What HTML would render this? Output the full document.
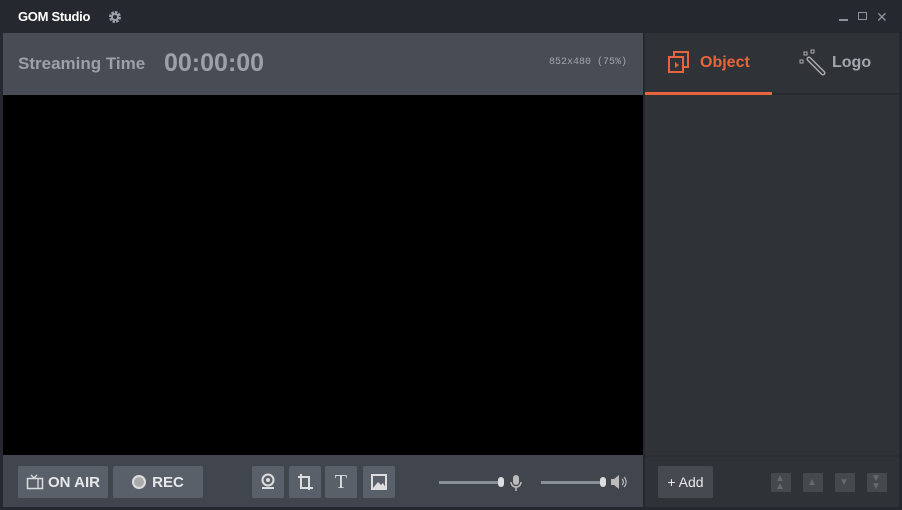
<!DOCTYPE html><html><head><style>
*{margin:0;padding:0;box-sizing:border-box}
body{width:902px;height:510px;background:#25282e;position:relative;overflow:hidden;font-family:"Liberation Sans",sans-serif}
.a{position:absolute}
.btn{position:absolute;background:#5a606a;border-radius:2px;color:#e6e8ea;font-weight:bold;font-size:15px;display:flex;align-items:center;justify-content:center}
.ib{position:absolute;top:466px;width:32px;height:32px;background:#5a606a;border-radius:2px}
.ar{position:absolute;top:473px;width:20px;height:19px;background:#45484d}
</style></head><body>
<div class="a" style="left:18px;top:9px;color:#fff;font-weight:bold;font-size:13px;letter-spacing:-0.3px">GOM <span style="font-size:13px">Studio</span></div>
<svg class="a" style="left:108px;top:10px" width="14" height="14" viewBox="0 0 14 14"><circle cx="7" cy="7" r="4.5" fill="none" stroke="#9aa0a8" stroke-width="3" stroke-dasharray="2.4 1.1"/><circle cx="7" cy="7" r="3" fill="none" stroke="#9aa0a8" stroke-width="2"/></svg>
<div class="a" style="left:839px;top:19px;width:9px;height:1.5px;background:#8d939b"></div>
<div class="a" style="left:858px;top:12px;width:9px;height:8px;border:1.5px solid #8d939b"></div>
<div class="a" style="left:876px;top:9px;color:#8d939b;font-size:14px">✕</div>
<div class="a" style="left:3px;top:33px;width:640px;height:62px;background:#474c55"></div>
<div class="a" style="left:18px;top:54px;color:#9ca1a8;font-weight:bold;font-size:17px">Streaming Time</div>
<div class="a" style="left:164px;top:49px;color:#9ca1a8;font-weight:bold;font-size:25px">00:00:00</div>
<div class="a" style="left:549px;top:57px;color:#a0a5ac;font-size:10px;font-family:'Liberation Mono',monospace">852x480 (75%)</div>
<div class="a" style="left:3px;top:95px;width:640px;height:360px;background:#000"></div>
<div class="a" style="left:3px;top:455px;width:640px;height:52px;background:#41464e"></div>
<div class="btn" style="left:18px;top:466px;width:90px;height:32px"><svg width="18" height="16" style="margin-right:4px"><path d="M5 1l3 3 3-3" fill="none" stroke="#ddd" stroke-width="1.3"/><rect x="1.5" y="4.5" width="15" height="10" fill="none" stroke="#ddd" stroke-width="1.5"/><path d="M12 5v10" stroke="#ddd" stroke-width="1.3"/></svg>ON AIR</div>
<div class="btn" style="left:113px;top:466px;width:90px;height:32px"><span style="display:inline-block;width:14px;height:14px;border-radius:50%;border:2px solid #ddd;background:#aaa;margin-right:6px"></span>REC</div>
<div class="ib" style="left:252px"><svg width="32" height="32"><circle cx="16" cy="14" r="5.5" fill="none" stroke="#ddd" stroke-width="2"/><circle cx="16" cy="14" r="2" fill="#ddd"/><rect x="10" y="21" width="12" height="2" fill="#ddd"/></svg></div>
<div class="ib" style="left:289px"><svg width="32" height="32"><path d="M12 8v14h12M9 11h11v13" fill="none" stroke="#ddd" stroke-width="2"/></svg></div>
<div class="ib" style="left:325px;color:#ddd;font-family:'Liberation Serif',serif;font-size:20px;text-align:center;line-height:32px">T</div>
<div class="ib" style="left:363px"><svg width="32" height="32"><rect x="9" y="9" width="14" height="14" fill="none" stroke="#ddd" stroke-width="2"/><path d="M10 22l5-6 3 3 2-2 3 5z" fill="#ddd"/></svg></div>
<div class="a" style="left:439px;top:481px;width:62px;height:3px;background:#8a9098"></div>
<div class="a" style="left:498px;top:477px;width:6px;height:10px;border-radius:3px;background:#ddd"></div>
<svg class="a" style="left:509px;top:474px" width="14" height="18"><rect x="4" y="1" width="6" height="10" rx="3" fill="#bbb"/><path d="M2 8a5 5 0 0 0 10 0M7 13v4" fill="none" stroke="#bbb" stroke-width="1.5"/></svg>
<div class="a" style="left:541px;top:481px;width:62px;height:3px;background:#8a9098"></div>
<div class="a" style="left:600px;top:477px;width:6px;height:10px;border-radius:3px;background:#ddd"></div>
<svg class="a" style="left:610px;top:474px" width="18" height="16"><path d="M1 5h3l5-4v14l-5-4H1z" fill="#bbb"/><path d="M12 5a4 4 0 0 1 0 6M14 3a7 7 0 0 1 0 10" fill="none" stroke="#bbb" stroke-width="1.2"/></svg>
<div class="a" style="left:645px;top:33px;width:254px;height:474px;background:#2f3237"></div>
<div class="a" style="left:645px;top:93px;width:254px;height:2px;background:#26292d"></div>
<div class="a" style="left:645px;top:92px;width:127px;height:3px;background:#e8643c"></div>
<svg class="a" style="left:667px;top:50px" width="26" height="26"><rect x="7" y="2" width="14" height="15" fill="none" stroke="#e8643c" stroke-width="2"/><rect x="2" y="7" width="14" height="15" fill="#2f3237" stroke="#e8643c" stroke-width="2"/><path d="M8 12l4 3-4 3z" fill="#e8643c"/></svg>
<div class="a" style="left:700px;top:54px;color:#e8643c;font-weight:bold;font-size:16px">Object</div>
<svg class="a" style="left:798px;top:49px" width="30" height="28"><rect x="2" y="11" width="3" height="3" fill="none" stroke="#aaa"/><rect x="6" y="3" width="3" height="3" fill="none" stroke="#aaa"/><rect x="13" y="1" width="3" height="3" fill="none" stroke="#aaa"/><path d="M11 10l14 14" stroke="#aaa" stroke-width="5" stroke-linecap="round"/><path d="M11 10l14 14" stroke="#2f3237" stroke-width="2" stroke-linecap="round"/></svg>
<div class="a" style="left:832px;top:54px;color:#a4a8ae;font-weight:bold;font-size:16px">Logo</div>
<div class="a" style="left:645px;top:455px;width:254px;height:2px;background:#2a2d31"></div>
<div class="btn" style="left:658px;top:466px;width:55px;height:32px;background:#464a50;font-weight:normal;font-size:14px">+ Add</div>
<div class="ar" style="left:771px"></div><div class="ar" style="left:803px"></div><div class="ar" style="left:835px"></div><div class="ar" style="left:867px"></div>
<div class="a" style="left:775px;top:475px;color:#666a70;font-size:10px;line-height:8px">▲<br>▲</div>
<div class="a" style="left:807px;top:477px;color:#666a70;font-size:10px">▲</div>
<div class="a" style="left:839px;top:477px;color:#666a70;font-size:10px">▼</div>
<div class="a" style="left:871px;top:475px;color:#666a70;font-size:10px;line-height:8px">▼<br>▼</div>
</body></html>
